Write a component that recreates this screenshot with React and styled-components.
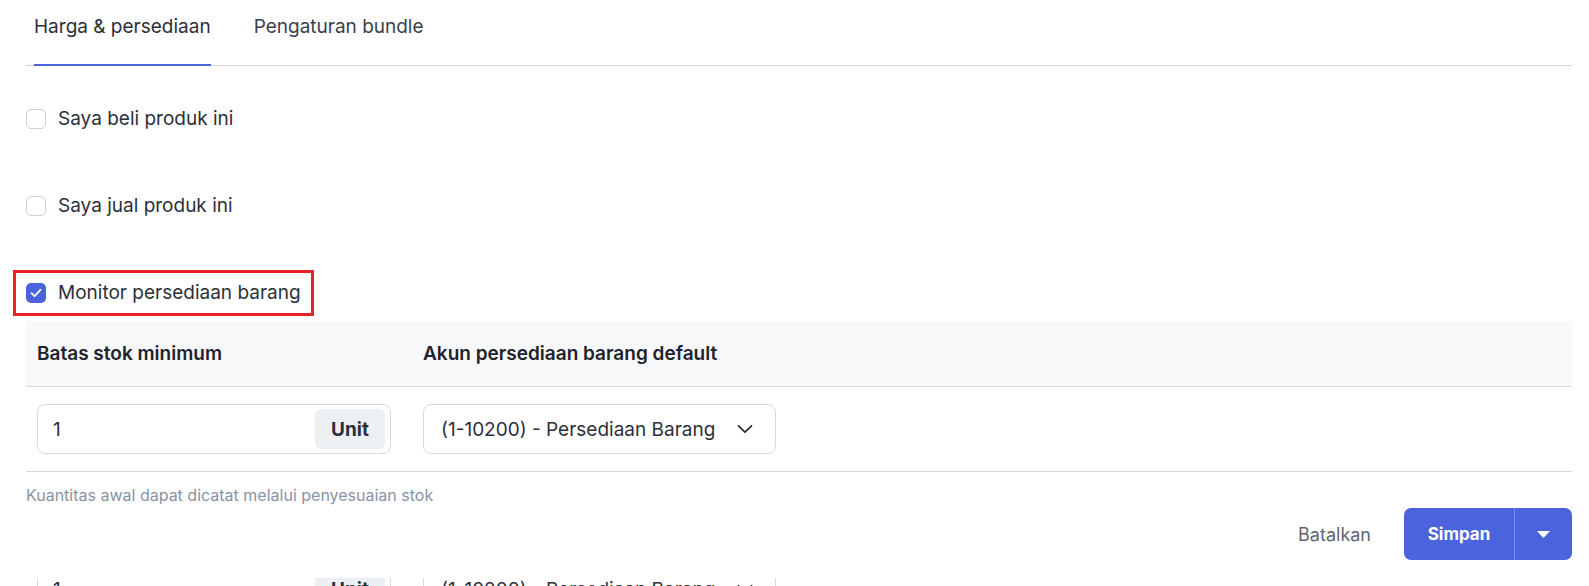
import React from 'react'
import styled, { createGlobalStyle } from 'styled-components'

const Global = createGlobalStyle`
  html, body {
    margin: 0;
    padding: 0;
    background: #fff;
    overflow: hidden;
  }
  body {
    font-family: Inter, "Noto Sans", sans-serif;
    color: #2b303a;
  }
`

const Page = styled.div`
  width: 1589px;
  height: 586px;
  box-sizing: border-box;
  padding: 0 17px 0 26px;
  display: flex;
  flex-direction: column;
`

const TabList = styled.div`
  display: flex;
  gap: 43px;
  padding-left: 8px;
  border-bottom: 1px solid #d5d8e0;
  height: 66px;
`

const Tab = styled.div`
  font-size: 19px;
  line-height: 23px;
  color: ${p => (p.active ? '#2b303a' : '#3a3f49')};
  padding-top: 15px;
  margin-bottom: -1px;
  border-bottom: 2px solid ${p => (p.active ? '#4b63dd' : 'transparent')};
  box-sizing: border-box;
`

const Checks = styled.div`
  display: flex;
  flex-direction: column;
  align-items: flex-start;
  gap: 67px;
  padding-top: 43px;
`

const CheckRow = styled.label`
  display: inline-flex;
  align-items: center;
  gap: 12px;
  height: 20px;
  line-height: 20px;
  font-size: 19px;
  color: #2b303a;
  outline: ${p => (p.marked ? '3px solid #ea1f28' : 'none')};
  outline-offset: 10px;
`

const Box = styled.span`
  width: 20px;
  height: 20px;
  box-sizing: border-box;
  border-radius: 5px;
  border: ${p => (p.checked ? 'none' : '1.5px solid #cdd2dc')};
  background: ${p => (p.checked ? '#4b63dd' : '#fff')};
  display: flex;
  align-items: center;
  justify-content: center;
  flex-shrink: 0;
`

const Table = styled.div`
  margin-top: 18px;
`

const Grid = styled.div`
  display: grid;
  grid-template-columns: 354px 353px;
  column-gap: 32px;
  padding: 0 11px;
  align-items: center;
`

const Head = styled(Grid)`
  height: 65px;
  background: #f7f8fa;
  border-bottom: 1px solid #d5d9e0;
`

const HeadCell = styled.div`
  font-size: 19px;
  font-weight: 600;
  color: #1f232b;
`

const Body = styled(Grid)`
  padding-top: 17px;
  padding-bottom: 17px;
  border-bottom: 1px solid #d5d9e0;
`

const Field = styled.div`
  height: 50px;
  box-sizing: border-box;
  border: 1px solid #d5d9e0;
  border-radius: 8px;
  display: flex;
  align-items: center;
  padding: 0 5px 0 15px;
  font-size: 19px;
  color: #2b303a;
`

const Value = styled.span`
  flex: 1;
`

const Addon = styled.span`
  width: 70px;
  height: 40px;
  border-radius: 6px;
  background: #edf0f3;
  display: flex;
  align-items: center;
  justify-content: center;
  font-weight: 700;
  color: #2b303a;
`

const Select = styled(Field)`
  padding: 0 22px 0 17px;
  justify-content: space-between;
`

const Hint = styled.div`
  font-size: 16px;
  line-height: 19px;
  color: #8a93a3;
  margin-top: 14px;
`

const Footer = styled.div`
  display: flex;
  justify-content: flex-end;
  align-items: center;
  gap: 33px;
  margin-top: 3px;
  padding-bottom: 18px;
`

const Cancel = styled.span`
  font-size: 18px;
  color: #5f6673;
`

const SplitButton = styled.div`
  display: flex;
  height: 52px;
  border-radius: 7px;
  background: #4b63dd;
  overflow: hidden;
`

const Main = styled.span`
  width: 110px;
  display: flex;
  align-items: center;
  justify-content: center;
  font-size: 17px;
  font-weight: 700;
  color: #fff;
  border-right: 1px solid #7d8ee8;
`

const Caret = styled.span`
  width: 57px;
  display: flex;
  align-items: center;
  justify-content: center;
`

const Peek = styled.div`
  height: 8px;
  overflow: hidden;
  > div {
    margin-top: -14px;
  }
`

function Check ({ checked }) {
  return (
    <Box checked={checked}>
      {checked && (
        <svg width='12' height='10' viewBox='0 0 12 10'>
          <path d='M1.5 5.2l3 3L10.5 1.8' fill='none' stroke='#fff' strokeWidth='1.8' strokeLinecap='round' strokeLinejoin='round' />
        </svg>
      )}
    </Box>
  )
}

function Chevron () {
  return (
    <svg width='16' height='10' viewBox='0 0 16 10'>
      <path d='M1.5 1.8L8 8.2l6.5-6.4' fill='none' stroke='#2b303a' strokeWidth='1.8' strokeLinecap='round' strokeLinejoin='round' />
    </svg>
  )
}

function StockFields () {
  return (
    <>
      <Field>
        <Value>1</Value>
        <Addon>Unit</Addon>
      </Field>
      <Select>
        <span>(1-10200) - Persediaan Barang</span>
        <Chevron />
      </Select>
    </>
  )
}

export default function App () {
  return (
    <Page>
      <Global />
      <TabList>
        <Tab active>Harga &amp; persediaan</Tab>
        <Tab>Pengaturan bundle</Tab>
      </TabList>

      <Checks>
        <CheckRow><Check />Saya beli produk ini</CheckRow>
        <CheckRow><Check />Saya jual produk ini</CheckRow>
        <CheckRow marked><Check checked />Monitor persediaan barang</CheckRow>
      </Checks>

      <Table>
        <Head>
          <HeadCell>Batas stok minimum</HeadCell>
          <HeadCell>Akun persediaan barang default</HeadCell>
        </Head>
        <Body>
          <StockFields />
        </Body>
      </Table>

      <Hint>Kuantitas awal dapat dicatat melalui penyesuaian stok</Hint>

      <Footer>
        <Cancel>Batalkan</Cancel>
        <SplitButton>
          <Main>Simpan</Main>
          <Caret>
            <svg width='13' height='7' viewBox='0 0 13 7'>
              <path d='M0 0h13L6.5 7z' fill='#fff' />
            </svg>
          </Caret>
        </SplitButton>
      </Footer>

      <Peek>
        <Grid>
          <StockFields />
        </Grid>
      </Peek>
    </Page>
  )
}
